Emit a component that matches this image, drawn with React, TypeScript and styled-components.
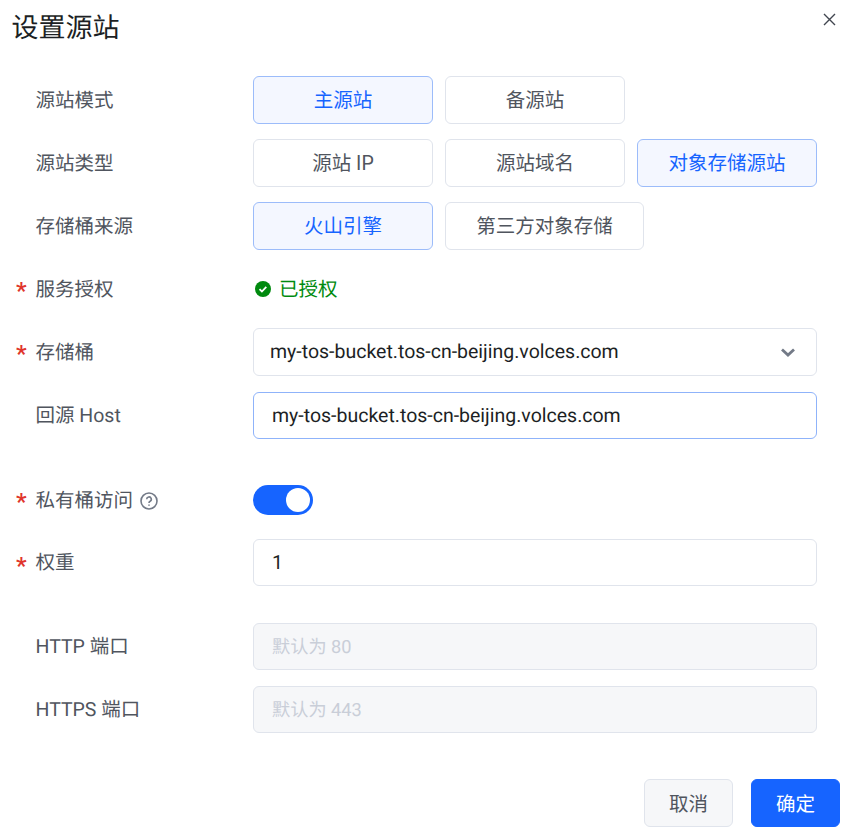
import React from "react";
import styled, { createGlobalStyle } from "styled-components";

const Global = createGlobalStyle`
  html, body { margin: 0; padding: 0; background: #fff; }
  body { font-family: Roboto, "Noto Sans CJK SC", sans-serif; text-rendering: geometricPrecision; }
`;

const Dialog = styled.div`
  width: 852px;
  height: 834px;
  box-sizing: border-box;
  background: #fff;
  display: flex;
  flex-direction: column;
  overflow: hidden;
`;

const Header = styled.header`
  height: 76px;
  display: flex;
  justify-content: space-between;
  align-items: flex-start;
  padding: 0 15px 0 11.5px;
  box-sizing: border-box;
`;

const Title = styled.h1`
  margin: 9px 0 0;
  font-size: 27px;
  line-height: 38px;
  font-weight: 400;
  color: #1c1f24;
`;

const CloseButton = styled.button`
  margin-top: 12px;
  padding: 0;
  border: 0;
  background: none;
  width: 15px;
  height: 15px;
  display: flex;
  color: #41464f;
`;

const Form = styled.form`
  display: flex;
  flex-direction: column;
  padding: 0 35px 0 16px;
`;

const Row = styled.div<{ $gap?: number; $h?: number }>`
  display: flex;
  align-items: center;
  min-height: ${(p) => p.$h ?? 48}px;
  margin-bottom: ${(p) => p.$gap ?? 15}px;
`;

const Label = styled.label<{ $latin?: boolean }>`
  width: 237px;
  flex: none;
  display: flex;
  align-items: center;
  font-size: 19.5px;
  line-height: 28px;
  color: #50555e;
  padding: ${(p) => (p.$latin ? "0" : "2px")} 0 0 19.5px;
  box-sizing: border-box;
  position: relative;
`;

const Star = styled.span`
  position: absolute;
  left: 0;
  top: 3px;
  color: #e0352b;
  font-size: 24px;
  line-height: 28px;
  font-weight: 500;
`;

const Help = styled.svg`
  margin-left: 7px;
  width: 18px;
  height: 18px;
  color: #737a87;
`;

const Choices = styled.div`
  display: flex;
  gap: 12px;
`;

const Choice = styled.button<{ $active?: boolean; $w?: number }>`
  width: ${(p) => p.$w ?? 180}px;
  height: 48px;
  box-sizing: border-box;
  border-radius: 6px;
  border: 1px solid ${(p) => (p.$active ? "#9cbcfa" : "#e0e4ec")};
  background: ${(p) => (p.$active ? "#f4f7ff" : "#fff")};
  color: ${(p) => (p.$active ? "#1664ff" : "#50555e")};
  font: inherit;
  font-size: 19.5px;
  line-height: 28px;
  padding: 1px 0 0;
`;

const Status = styled.div`
  display: flex;
  align-items: center;
  gap: 8px;
  padding-left: 2px;
  font-size: 19.5px;
  line-height: 28px;
  color: #008a0e;
`;

const StatusText = styled.span`
  padding-top: 1px;
`;

const Select = styled.div`
  flex: 1;
  height: 48px;
  box-sizing: border-box;
  border: 1px solid #e0e4ec;
  border-radius: 6px;
  display: flex;
  align-items: center;
  justify-content: space-between;
  padding: 0 20px 1px 16px;
  font-size: 19.5px;
  line-height: 28px;
  color: #1c1f24;
`;

const Input = styled.div<{ $focus?: boolean; $disabled?: boolean }>`
  flex: 1;
  height: 47px;
  box-sizing: border-box;
  border: 1px solid ${(p) => (p.$focus ? "#8fb3fa" : "#e0e4ec")};
  background: ${(p) => (p.$disabled ? "#f6f7f9" : "#fff")};
  border-radius: 6px;
  display: flex;
  align-items: center;
  padding: ${(p) => (p.$disabled ? "2px" : "0")} 18px 0;
  font-size: ${(p) => (p.$disabled ? "18.2px" : "19.5px")};
  line-height: 28px;
  color: ${(p) => (p.$disabled ? "#c9ced8" : "#1c1f24")};
`;

const Switch = styled.div`
  width: 60px;
  height: 30px;
  border-radius: 15px;
  background: #1664ff;
  display: flex;
  align-items: center;
  justify-content: flex-end;
  padding: 0 3px;
  box-sizing: border-box;
`;

const Knob = styled.span`
  width: 24px;
  height: 24px;
  border-radius: 50%;
  background: #fff;
`;

const Footer = styled.footer`
  display: flex;
  justify-content: flex-end;
  gap: 18px;
  padding: 46px 12px 0 0;
`;

const FootButton = styled.button<{ $primary?: boolean }>`
  width: 89px;
  height: 48px;
  box-sizing: border-box;
  border-radius: 6px;
  border: 1px solid ${(p) => (p.$primary ? "#1664ff" : "#e0e4ec")};
  background: ${(p) => (p.$primary ? "#1664ff" : "#f6f7f9")};
  color: ${(p) => (p.$primary ? "#fff" : "#50555e")};
  font: inherit;
  font-size: 19.5px;
  line-height: 28px;
  padding: 3px 0 0;
`;

export default function App() {
  return (
    <Dialog>
      <Global />
      <Header>
        <Title>设置源站</Title>
        <CloseButton type="button" aria-label="关闭">
          <svg width="15" height="15" viewBox="0 0 15 15" fill="none" stroke="currentColor" strokeWidth="1.4">
            <path d="M2 2l11 11M13 2L2 13" />
          </svg>
        </CloseButton>
      </Header>
      <Form>
        <Row>
          <Label>源站模式</Label>
          <Choices>
            <Choice type="button" $active>主源站</Choice>
            <Choice type="button">备源站</Choice>
          </Choices>
        </Row>
        <Row>
          <Label>源站类型</Label>
          <Choices>
            <Choice type="button">源站 IP</Choice>
            <Choice type="button">源站域名</Choice>
            <Choice type="button" $active>对象存储源站</Choice>
          </Choices>
        </Row>
        <Row>
          <Label>存储桶来源</Label>
          <Choices>
            <Choice type="button" $active>火山引擎</Choice>
            <Choice type="button" $w={199}>第三方对象存储</Choice>
          </Choices>
        </Row>
        <Row>
          <Label><Star>*</Star>服务授权</Label>
          <Status>
            <svg width="16" height="16" viewBox="0 0 16 16">
              <circle cx="8" cy="8" r="8" fill="#008a0e" />
              <path d="M4.5 8.2l2.4 2.3 4.4-4.6" fill="none" stroke="#fff" strokeWidth="1.8" />
            </svg>
            <StatusText>已授权</StatusText>
          </Status>
        </Row>
        <Row $gap={16}>
          <Label><Star>*</Star>存储桶</Label>
          <Select>
            my-tos-bucket.tos-cn-beijing.volces.com
            <svg width="16" height="16" viewBox="0 0 16 16" fill="none" stroke="#737a87" strokeWidth="2.8">
              <path d="M2 5.5l6 5.5 6-5.5" />
            </svg>
          </Select>
        </Row>
        <Row $gap={37} $h={47}>
          <Label $latin>回源 Host</Label>
          <Input $focus>my-tos-bucket.tos-cn-beijing.volces.com</Input>
        </Row>
        <Row>
          <Label>
            <Star>*</Star>私有桶访问
            <Help viewBox="0 0 18 18" fill="none" stroke="currentColor" strokeWidth="1.6">
              <circle cx="9" cy="9" r="8" />
              <path d="M6.7 7.2a2.3 2.3 0 1 1 3.4 2c-.8.4-1.1.9-1.1 1.7" />
              <path d="M9 12.4v1.4" />
            </Help>
          </Label>
          <Switch><Knob /></Switch>
        </Row>
        <Row $gap={37} $h={47}>
          <Label $latin><Star>*</Star>权重</Label>
          <Input>1</Input>
        </Row>
        <Row $gap={16} $h={47}>
          <Label $latin>HTTP 端口</Label>
          <Input $disabled>默认为 80</Input>
        </Row>
        <Row $gap={0} $h={47}>
          <Label $latin>HTTPS 端口</Label>
          <Input $disabled>默认为 443</Input>
        </Row>
      </Form>
      <Footer>
        <FootButton type="button">取消</FootButton>
        <FootButton type="button" $primary>确定</FootButton>
      </Footer>
    </Dialog>
  );
}
